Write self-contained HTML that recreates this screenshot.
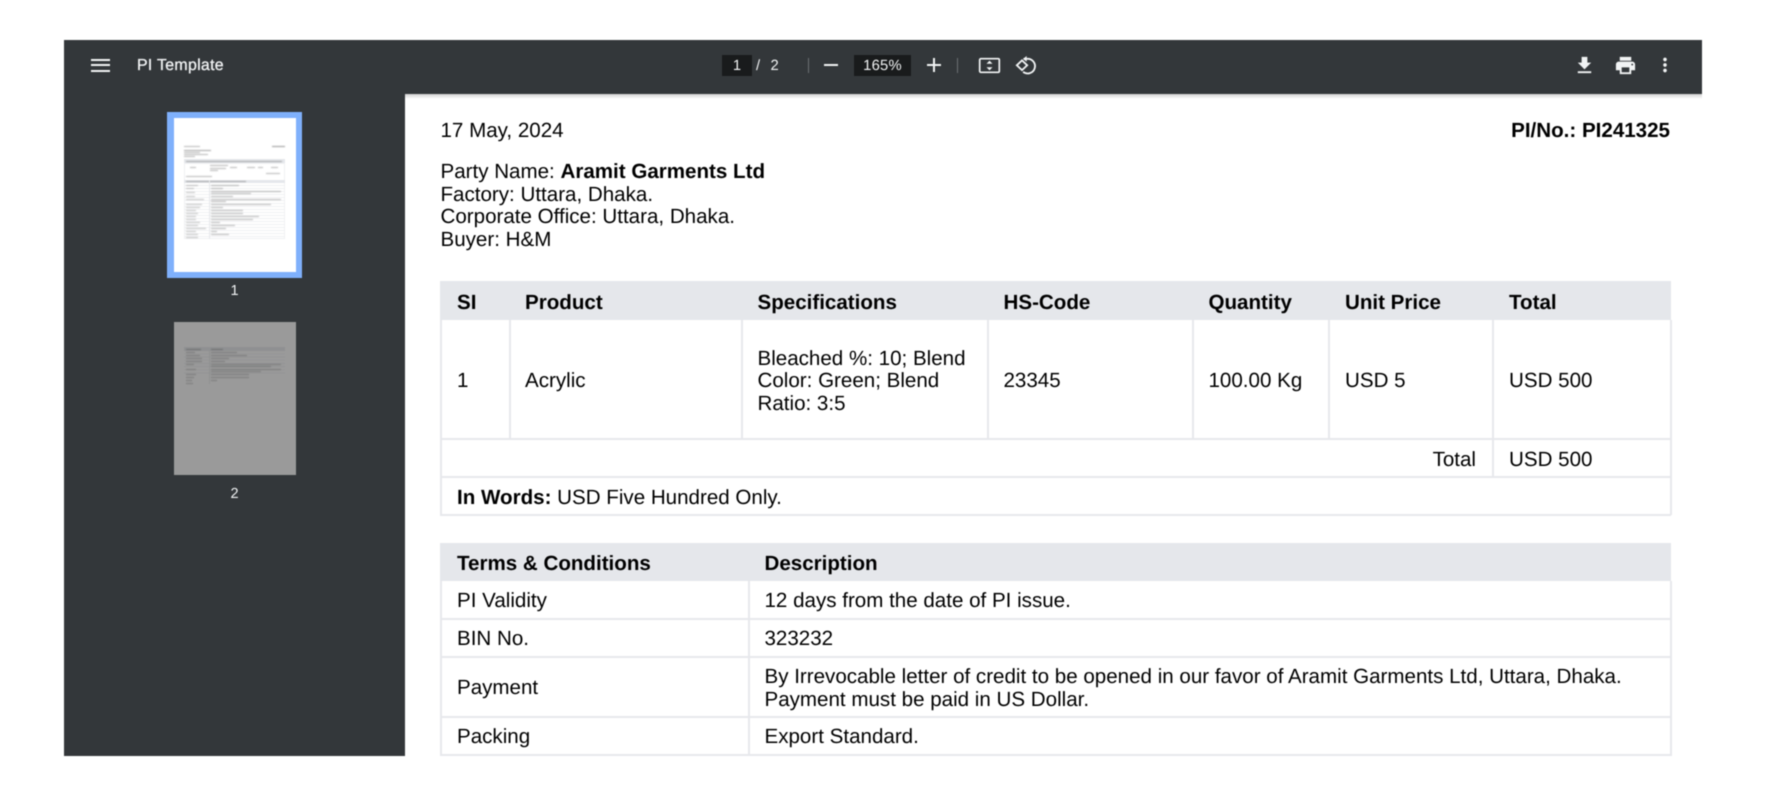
<!DOCTYPE html>
<html><head><meta charset="utf-8"><title>PI Template</title>
<style>
html,body{margin:0;padding:0;background:#fff;width:1766px;height:798px;overflow:hidden}
body{font-family:"Liberation Sans",sans-serif;position:relative;color:#000}
.a{position:absolute}
#wrap{position:absolute;left:0;top:0;width:1766px;height:798px;filter:blur(.4px);text-rendering:geometricPrecision}
.t{position:absolute;white-space:nowrap;font-size:20.57px;line-height:23px;height:23px}
.b{font-weight:700}
.l{position:absolute;background:#e7e8ec}
.h{position:absolute;background:#e5e7eb}
.w{position:absolute;color:#f1f3f4;white-space:nowrap}
svg{position:absolute;overflow:visible}
.m{position:absolute;background:#666;filter:blur(.6px);opacity:.62}
</style></head><body><div id="wrap">

<!-- Document area -->
<div class="a" style="left:405px;top:94px;width:1297px;height:662px;overflow:hidden;background:#fff">
<div class="a" style="left:-405px;top:-94px;width:1766px;height:798px">

<div class="t" style="left:440.5px;top:119px">17 May, 2024</div>
<div class="t b" style="right:96px;top:119px">PI/No.: PI241325</div>
<div class="t" style="left:440.5px;top:160px">Party Name: <span class="b">Aramit Garments Ltd</span></div>
<div class="t" style="left:440.5px;top:182.5px">Factory: Uttara, Dhaka.</div>
<div class="t" style="left:440.5px;top:205px">Corporate Office: Uttara, Dhaka.</div>
<div class="t" style="left:440.5px;top:227.5px">Buyer: H&amp;M</div>

<!-- Table 1 -->
<div class="h" style="left:440px;top:281px;width:1231px;height:39px"></div>
<div class="l" style="left:440px;top:320px;width:2px;height:195px"></div>
<div class="l" style="left:1669.5px;top:320px;width:2px;height:195px"></div>
<div class="l" style="left:508.5px;top:320px;width:2px;height:118px"></div>
<div class="l" style="left:741px;top:320px;width:2px;height:118px"></div>
<div class="l" style="left:986.5px;top:320px;width:2px;height:118px"></div>
<div class="l" style="left:1192px;top:320px;width:2px;height:118px"></div>
<div class="l" style="left:1328px;top:320px;width:2px;height:118px"></div>
<div class="l" style="left:1492px;top:320px;width:2px;height:156px"></div>
<div class="l" style="left:440px;top:438px;width:1231px;height:2px"></div>
<div class="l" style="left:440px;top:476px;width:1231px;height:2px"></div>
<div class="l" style="left:440px;top:514px;width:1231px;height:2px"></div>

<div class="t b" style="left:457px;top:291px">SI</div>
<div class="t b" style="left:525px;top:291px">Product</div>
<div class="t b" style="left:757.5px;top:291px">Specifications</div>
<div class="t b" style="left:1003.5px;top:291px">HS-Code</div>
<div class="t b" style="left:1208.5px;top:291px">Quantity</div>
<div class="t b" style="left:1345px;top:291px">Unit Price</div>
<div class="t b" style="left:1509px;top:291px">Total</div>

<div class="t" style="left:457px;top:369px">1</div>
<div class="t" style="left:525px;top:369px">Acrylic</div>
<div class="t" style="left:757.5px;top:346.5px">Bleached %: 10; Blend</div>
<div class="t" style="left:757.5px;top:369px">Color: Green; Blend</div>
<div class="t" style="left:757.5px;top:391.5px">Ratio: 3:5</div>
<div class="t" style="left:1003.5px;top:369px">23345</div>
<div class="t" style="left:1208.5px;top:369px">100.00 Kg</div>
<div class="t" style="left:1345px;top:369px">USD 5</div>
<div class="t" style="left:1509px;top:369px">USD 500</div>

<div class="t" style="right:290px;top:447.5px">Total</div>
<div class="t" style="left:1509px;top:447.5px">USD 500</div>
<div class="t" style="left:457px;top:485.5px"><span class="b">In Words:</span> USD Five Hundred Only.</div>

<!-- Table 2 -->
<div class="h" style="left:440px;top:543px;width:1231px;height:38px"></div>
<div class="l" style="left:440px;top:581px;width:2px;height:180px"></div>
<div class="l" style="left:1669.5px;top:581px;width:2px;height:180px"></div>
<div class="l" style="left:748px;top:581px;width:2px;height:180px"></div>
<div class="l" style="left:440px;top:618px;width:1231px;height:2px"></div>
<div class="l" style="left:440px;top:655.5px;width:1231px;height:2px"></div>
<div class="l" style="left:440px;top:716px;width:1231px;height:2px"></div>
<div class="l" style="left:440px;top:754px;width:1231px;height:2px"></div>

<div class="t b" style="left:457px;top:552px">Terms &amp; Conditions</div>
<div class="t b" style="left:764.5px;top:552px">Description</div>
<div class="t" style="left:457px;top:589px">PI Validity</div>
<div class="t" style="left:764.5px;top:589px">12 days from the date of PI issue.</div>
<div class="t" style="left:457px;top:626.5px">BIN No.</div>
<div class="t" style="left:764.5px;top:626.5px">323232</div>
<div class="t" style="left:457px;top:676px">Payment</div>
<div class="t" style="left:764.5px;top:664.5px">By Irrevocable letter of credit to be opened in our favor of Aramit Garments Ltd, Uttara, Dhaka.</div>
<div class="t" style="left:764.5px;top:687.5px">Payment must be paid in US Dollar.</div>
<div class="t" style="left:457px;top:725px">Packing</div>
<div class="t" style="left:764.5px;top:725px">Export Standard.</div>
</div>
<!-- toolbar shadow on page -->
<div class="a" style="left:0;top:0;width:1297px;height:5px;background:linear-gradient(#d2d2d2,rgba(255,255,255,0))"></div>
</div>

<!-- Sidebar -->
<div class="a" style="left:64px;top:94px;width:341px;height:662px;background:#33373a"></div>
<!-- Thumb 1 -->
<div class="a" style="left:167px;top:112px;width:135px;height:165.5px;background:#7fb0fb"></div>
<div class="a" style="left:173.5px;top:118px;width:122px;height:153.5px;background:#fff"></div>
<div class="m" style="left:184px;top:146px;width:16px;height:1px;background:#888"></div>
<div class="m" style="left:272px;top:146px;width:13px;height:1px;background:#555"></div>
<div class="m" style="left:184px;top:149.5px;width:27px;height:1px;background:#666"></div>
<div class="m" style="left:184px;top:152px;width:16px;height:1px;background:#888"></div>
<div class="m" style="left:184px;top:154px;width:24px;height:1px;background:#888"></div>
<div class="m" style="left:184px;top:156px;width:11px;height:1px;background:#888"></div>
<div class="a" style="left:184px;top:159px;width:101px;height:4px;background:#e5e7eb"></div>
<div class="m" style="left:186px;top:160.5px;width:96px;height:1px;background:#777"></div>
<div class="a" style="left:184px;top:163px;width:101px;height:26px;border:1px solid #f0f1f3;box-sizing:border-box"></div>
<div class="m" style="left:210px;top:165px;width:18px;height:1px;background:#888"></div>
<div class="m" style="left:210px;top:167.5px;width:16px;height:1px;background:#888"></div>
<div class="m" style="left:210px;top:170px;width:8px;height:1px;background:#888"></div>
<div class="m" style="left:190px;top:167px;width:6px;height:1px;background:#888"></div>
<div class="m" style="left:230px;top:167px;width:7px;height:1px;background:#888"></div>
<div class="m" style="left:247px;top:167px;width:8px;height:1px;background:#888"></div>
<div class="m" style="left:258px;top:167px;width:5px;height:1px;background:#888"></div>
<div class="m" style="left:271px;top:167px;width:7px;height:1px;background:#888"></div>
<div class="m" style="left:266px;top:173px;width:14px;height:1px;background:#888"></div>
<div class="m" style="left:186px;top:176px;width:26px;height:1px;background:#888"></div>
<div class="a" style="left:184px;top:180px;width:101px;height:3px;background:#e5e7eb"></div>
<div class="m" style="left:186px;top:181px;width:60px;height:1px;background:#777"></div>
<div class="a" style="left:184px;top:183px;width:101px;height:56px;border:1px solid #f0f1f3;border-top:0;box-sizing:border-box;background:repeating-linear-gradient(#fff 0,#fff 2.1px,#f0f1f3 2.1px,#f0f1f3 3px)"></div>
<div class="a" style="left:209px;top:180px;width:1px;height:59px;background:#e8e9ec"></div>
<!-- rows of lines in thumb 1 -->
<div class="m" style="left:186px;top:184.5px;width:12px;height:1px;background:#999"></div><div class="m" style="left:211px;top:184.5px;width:28px;height:1px;background:#888"></div>
<div class="m" style="left:186px;top:187.5px;width:8px;height:1px;background:#999"></div><div class="m" style="left:211px;top:187.5px;width:12px;height:1px;background:#888"></div>
<div class="m" style="left:186px;top:191.5px;width:9px;height:1px;background:#999"></div><div class="m" style="left:211px;top:190.5px;width:70px;height:1px;background:#888"></div>
<div class="m" style="left:211px;top:192.5px;width:40px;height:1px;background:#888"></div>
<div class="m" style="left:186px;top:195.5px;width:9px;height:1px;background:#999"></div><div class="m" style="left:211px;top:195.5px;width:22px;height:1px;background:#888"></div>
<div class="m" style="left:186px;top:199px;width:18px;height:1px;background:#999"></div><div class="m" style="left:211px;top:198.5px;width:70px;height:1px;background:#888"></div>
<div class="m" style="left:211px;top:200.5px;width:15px;height:1px;background:#888"></div>
<div class="m" style="left:186px;top:203.5px;width:16px;height:1px;background:#999"></div><div class="m" style="left:211px;top:203.5px;width:60px;height:1px;background:#888"></div>
<div class="m" style="left:186px;top:206.5px;width:14px;height:1px;background:#999"></div><div class="m" style="left:211px;top:206.5px;width:12px;height:1px;background:#888"></div>
<div class="m" style="left:186px;top:209.5px;width:10px;height:1px;background:#999"></div><div class="m" style="left:211px;top:209.5px;width:32px;height:1px;background:#888"></div>
<div class="m" style="left:186px;top:212.5px;width:12px;height:1px;background:#999"></div><div class="m" style="left:211px;top:212.5px;width:32px;height:1px;background:#888"></div>
<div class="m" style="left:186px;top:215.5px;width:10px;height:1px;background:#999"></div><div class="m" style="left:211px;top:215.5px;width:48px;height:1px;background:#888"></div>
<div class="m" style="left:186px;top:218.5px;width:10px;height:1px;background:#999"></div><div class="m" style="left:211px;top:218.5px;width:42px;height:1px;background:#888"></div>
<div class="m" style="left:186px;top:221.5px;width:14px;height:1px;background:#999"></div><div class="m" style="left:211px;top:221.5px;width:9px;height:1px;background:#888"></div>
<div class="m" style="left:186px;top:225px;width:12px;height:1px;background:#999"></div><div class="m" style="left:211px;top:225px;width:24px;height:1px;background:#888"></div>
<div class="m" style="left:186px;top:228px;width:20px;height:1px;background:#999"></div><div class="m" style="left:211px;top:228px;width:15px;height:1px;background:#888"></div>
<div class="m" style="left:186px;top:231px;width:10px;height:1px;background:#999"></div><div class="m" style="left:211px;top:231px;width:6px;height:1px;background:#888"></div>
<div class="m" style="left:186px;top:234px;width:12px;height:1px;background:#999"></div><div class="m" style="left:211px;top:234px;width:18px;height:1px;background:#888"></div>
<div class="m" style="left:186px;top:237px;width:12px;height:1px;background:#999"></div>
<div class="w" style="left:167px;width:135px;text-align:center;top:283px;font-size:14.5px;line-height:17px">1</div>

<!-- Thumb 2 -->
<div class="a" style="left:173.5px;top:321.5px;width:122px;height:153px;background:#9a9a9a"></div>
<div class="a" style="left:184px;top:347px;width:101px;height:3.5px;background:#8f9092"></div>
<div class="a" style="left:184px;top:350.5px;width:101px;height:24.5px;background:repeating-linear-gradient(#9a9a9a 0,#9a9a9a 2.4px,#939495 2.4px,#939495 3.2px)"></div>
<div class="a" style="left:209px;top:347px;width:1px;height:37px;background:#909192"></div>
<div class="m" style="left:186px;top:348.5px;width:15px;height:1px;background:#555"></div><div class="m" style="left:211px;top:348.5px;width:12px;height:1px;background:#555"></div>
<div class="m" style="left:186px;top:351.5px;width:9px;height:1px;background:#666"></div><div class="m" style="left:211px;top:351.5px;width:26px;height:1px;background:#666"></div>
<div class="m" style="left:186px;top:354.5px;width:14px;height:1px;background:#666"></div><div class="m" style="left:211px;top:354.5px;width:36px;height:1px;background:#666"></div>
<div class="m" style="left:186px;top:358px;width:16px;height:1px;background:#666"></div><div class="m" style="left:211px;top:358px;width:18px;height:1px;background:#666"></div>
<div class="m" style="left:186px;top:361px;width:16px;height:1px;background:#666"></div><div class="m" style="left:211px;top:361px;width:14px;height:1px;background:#666"></div>
<div class="m" style="left:186px;top:364px;width:8px;height:1px;background:#666"></div><div class="m" style="left:211px;top:364px;width:70px;height:1px;background:#666"></div>
<div class="m" style="left:211px;top:366px;width:60px;height:1px;background:#666"></div>
<div class="m" style="left:186px;top:369px;width:10px;height:1px;background:#666"></div><div class="m" style="left:211px;top:369px;width:70px;height:1px;background:#666"></div>
<div class="m" style="left:211px;top:371px;width:50px;height:1px;background:#666"></div>
<div class="m" style="left:186px;top:373.5px;width:10px;height:1px;background:#666"></div><div class="m" style="left:211px;top:373.5px;width:38px;height:1px;background:#666"></div>
<div class="m" style="left:186px;top:376.5px;width:8px;height:1px;background:#666"></div><div class="m" style="left:211px;top:376.5px;width:38px;height:1px;background:#666"></div>
<div class="m" style="left:186px;top:379.5px;width:6px;height:1px;background:#666"></div><div class="m" style="left:211px;top:379.5px;width:6px;height:1px;background:#666"></div>
<div class="m" style="left:186px;top:382.5px;width:7px;height:1px;background:#666"></div>
<div class="w" style="left:167px;width:135px;text-align:center;top:486px;font-size:14.5px;line-height:17px">2</div>

<!-- Toolbar -->
<div class="a" style="left:64px;top:40px;width:1638px;height:54px;background:#33373a"></div>

<!-- menu icon -->
<div class="a" style="left:91px;top:58.8px;width:18.5px;height:2.2px;background:#f1f3f4"></div>
<div class="a" style="left:91px;top:64.2px;width:18.5px;height:2.2px;background:#f1f3f4"></div>
<div class="a" style="left:91px;top:69.6px;width:18.5px;height:2.2px;background:#f1f3f4"></div>
<div class="w" style="left:137px;top:56.5px;font-size:15.9px;line-height:18px;letter-spacing:.3px;-webkit-text-stroke:.3px #f1f3f4">PI Template</div>

<!-- page selector -->
<div class="a" style="left:722px;top:55px;width:30px;height:20.5px;background:#191b1c"></div>
<div class="w" style="left:722px;width:30px;text-align:center;top:56.5px;font-size:14.8px;line-height:18px">1</div>
<div class="w" style="left:756px;top:56.5px;font-size:14.8px;line-height:18px">/</div>
<div class="w" style="left:770.5px;top:56.5px;font-size:14.8px;line-height:18px">2</div>
<div class="a" style="left:807.5px;top:58px;width:1.2px;height:15px;background:#6b6f72"></div>
<div class="a" style="left:824px;top:64.3px;width:14px;height:1.8px;background:#f1f3f4"></div>
<div class="a" style="left:854px;top:55px;width:57px;height:20.5px;background:#191b1c"></div>
<div class="w" style="left:854px;width:57px;text-align:center;top:56.5px;font-size:14.8px;line-height:18px;letter-spacing:.2px">165%</div>
<div class="a" style="left:926.5px;top:64.3px;width:14px;height:2px;background:#f1f3f4"></div>
<div class="a" style="left:932.6px;top:58.2px;width:2px;height:14px;background:#f1f3f4"></div>
<div class="a" style="left:956.5px;top:58px;width:1.2px;height:15px;background:#6b6f72"></div>

<!-- fit icon -->
<svg style="left:978px;top:57px" width="23" height="17" viewBox="0 0 23 17">
<rect x="1.7" y="1.7" width="19.6" height="13.6" rx="1.2" fill="none" stroke="#f1f3f4" stroke-width="1.7"/>
<path d="M11.5 3.6l3 3.2h-6zM11.5 13.4l3-3.2h-6z" fill="#f1f3f4"/>
</svg>
<!-- rotate icon -->
<svg style="left:1015px;top:55px" width="22" height="20" viewBox="0 0 22 20">
<path d="M1.8 10.3L7 5.4l5.2 4.9L7 15.2z" fill="none" stroke="#f1f3f4" stroke-width="1.8"/>
<path d="M8.5 3.9h3.2a7.3 7.3 0 1 1-3.6 12.9" fill="none" stroke="#f1f3f4" stroke-width="1.8"/>
<path d="M11.7 1L8 3.9l3.7 2.9z" fill="#f1f3f4"/>
</svg>

<!-- download -->
<svg style="left:1572.5px;top:53.5px" width="23" height="23" viewBox="0 0 24 24"><path fill="#f1f3f4" d="M19 9h-4V3H9v6H5l7 7 7-7zM5 18v2h14v-2H5z"/></svg>
<!-- print -->
<svg style="left:1613.5px;top:53.5px" width="23" height="23" viewBox="0 0 24 24"><path fill="#f1f3f4" d="M19 8H5c-1.66 0-3 1.34-3 3v6h4v4h12v-4h4v-6c0-1.66-1.34-3-3-3zm-3 11H8v-5h8v5zm3-7c-.55 0-1-.45-1-1s.45-1 1-1 1 .45 1 1-.45 1-1 1zm-1-9H6v4h12V3z"/></svg>
<!-- more -->
<svg style="left:1654px;top:54px" width="22" height="22" viewBox="0 0 24 24"><path fill="#f1f3f4" d="M12 8c1.1 0 2-.9 2-2s-.9-2-2-2-2 .9-2 2 .9 2 2 2zm0 2c-1.1 0-2 .9-2 2s.9 2 2 2 2-.9 2-2-.9-2-2-2zm0 6c-1.1 0-2 .9-2 2s.9 2 2 2 2-.9 2-2-.9-2-2-2z"/></svg>

</div></body></html>
